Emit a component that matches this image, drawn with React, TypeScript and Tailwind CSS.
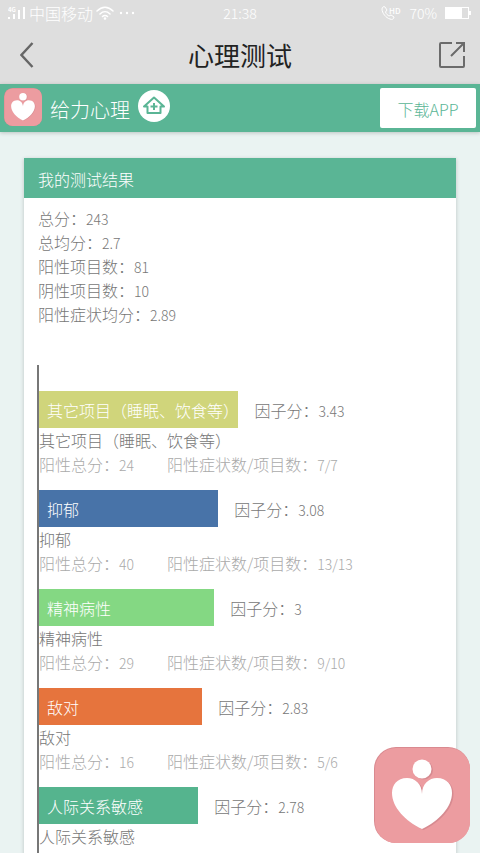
type Factor = {
  name: string;
  score: string;
  positiveTotal: string;
  ratio: string;
  barPercent: number;
  barColor: string;
};

const summary = [
  { label: "总分", value: "243" },
  { label: "总均分", value: "2.7" },
  { label: "阳性项目数", value: "81" },
  { label: "阴性项目数", value: "10" },
  { label: "阳性症状均分", value: "2.89" },
];

const factors: Factor[] = [
  {
    name: "其它项目（睡眠、饮食等）",
    score: "3.43",
    positiveTotal: "24",
    ratio: "7/7",
    barPercent: 49.5,
    barColor: "bg-[#d0d57b]",
  },
  {
    name: "抑郁",
    score: "3.08",
    positiveTotal: "40",
    ratio: "13/13",
    barPercent: 44.5,
    barColor: "bg-[#4873a8]",
  },
  {
    name: "精神病性",
    score: "3",
    positiveTotal: "29",
    ratio: "9/10",
    barPercent: 43.5,
    barColor: "bg-[#84d883]",
  },
  {
    name: "敌对",
    score: "2.83",
    positiveTotal: "16",
    ratio: "5/6",
    barPercent: 40.5,
    barColor: "bg-[#e6743d]",
  },
  {
    name: "人际关系敏感",
    score: "2.78",
    positiveTotal: "25",
    ratio: "9/9",
    barPercent: 39.5,
    barColor: "bg-[#55b48e]",
  },
];

function HeartLogo({ className }: { className: string }) {
  return (
    <svg viewBox="0 0 96 96" className={className} aria-hidden="true">
      <rect width="96" height="96" rx="22" fill="#d98a90" />
      <rect x="1" y="1" width="95" height="95" rx="21" fill="#ec9ca0" />
      <g fill="#c97f86" opacity="0.6" transform="translate(1.5 1)">
        <circle cx="48" cy="22" r="9.5" />
        <path d="M48 47C48 37 41 31 33 31C23 31 18 38 18 46C18 60 31 74 48 82C65 74 78 60 78 46C78 38 73 31 63 31C55 31 48 37 48 47Z" />
      </g>
      <g fill="#fff">
        <circle cx="48" cy="22" r="9.5" />
        <path d="M48 47C48 37 41 31 33 31C23 31 18 38 18 46C18 60 31 74 48 82C65 74 78 60 78 46C78 38 73 31 63 31C55 31 48 37 48 47Z" />
      </g>
    </svg>
  );
}

function StatusBar() {
  return (
    <div className="grid h-[26px] grid-cols-3 items-center pr-2 pl-2 text-sm text-white">
      <div className="flex items-center gap-[3px]">
        <svg viewBox="0 0 18 14" className="h-3.5 w-[18px] shrink-0" fill="#fff" aria-hidden="true">
          <text x="0" y="6" fontSize="6" fontWeight="700">
            4G
          </text>
          <rect x="0" y="11" width="2" height="2" />
          <rect x="5" y="8" width="2" height="5" />
          <rect x="10" y="4" width="2" height="9" />
          <rect x="15" y="1" width="2" height="12" />
        </svg>
        <span className="text-base whitespace-nowrap">中国移动</span>
        <svg
          viewBox="0 0 18 14"
          className="h-3.5 w-[18px] shrink-0"
          fill="none"
          stroke="#fff"
          strokeWidth="1.5"
          strokeLinecap="round"
          aria-hidden="true"
        >
          <path d="M1 5C6 0 12 0 17 5M4 8C7 5 11 5 14 8M6.5 10.5C8 9 10 9 11.5 10.5" />
          <circle cx="9" cy="12.5" r="0.6" fill="#fff" />
        </svg>
        <svg viewBox="0 0 16 4" className="ml-0.5 h-1 w-4 shrink-0" fill="#fff" aria-hidden="true">
          <circle cx="2" cy="2" r="1.2" />
          <circle cx="8" cy="2" r="1.2" />
          <circle cx="14" cy="2" r="1.2" />
        </svg>
      </div>
      <span className="text-center">21:38</span>
      <div className="flex items-center justify-end gap-2">
        <svg viewBox="0 0 20 14" className="h-3.5 w-5" fill="none" stroke="#fff" aria-hidden="true">
          <path d="M1 3C1 1 3 0 4 1L6 4L4.5 6C5 8 7 9.5 8 10L10 9L13 11C13 13 11 14 9 13C5 12 1 7 1 3Z" />
          <text x="8" y="8" fontSize="8" fontWeight="500" fill="#fff" stroke="none">
            HD
          </text>
        </svg>
        <span>70%</span>
        <svg viewBox="0 0 27 12" className="h-3 w-[27px]" aria-hidden="true">
          <rect x="0.5" y="0.5" width="23" height="11" fill="none" stroke="#fff" />
          <rect x="1" y="1" width="16" height="10" fill="#fff" />
          <rect x="24" y="4" width="2" height="4" fill="#fff" />
        </svg>
      </div>
    </div>
  );
}

function TitleBar() {
  return (
    <div className="flex h-[58px] items-center justify-between px-3.5 text-[#222]">
      <button type="button" aria-label="返回" className="flex h-10 w-10 items-center pl-1.5">
        <svg
          viewBox="0 0 14 26"
          className="h-[26px] w-3.5"
          fill="none"
          stroke="#666"
          strokeWidth="2.4"
          aria-hidden="true"
        >
          <path d="M12.5 1L1.5 13L12.5 25" />
        </svg>
      </button>
      <h1 className="text-[26px] leading-8 font-normal">心理测试</h1>
      <button type="button" aria-label="分享" className="flex h-10 w-10 items-center justify-end">
        <svg
          viewBox="0 0 28 28"
          className="h-7 w-7"
          fill="none"
          stroke="#6b6b6b"
          strokeWidth="2"
          aria-hidden="true"
        >
          <path d="M14 2H3Q2 2 2 3V25Q2 26 3 26H25Q26 26 26 25V15M18 2H26V11M13 15L26 2" />
        </svg>
      </button>
    </div>
  );
}

function Banner() {
  return (
    <div className="relative flex h-12 shrink-0 items-center bg-[#5ab595] pr-1 pl-1 shadow-[0_1px_4px_rgba(0,0,0,0.2)]">
      <HeartLogo className="mb-0.5 h-[38px] w-[38px]" />
      <span className="ml-2 pt-1 text-xl text-white">给力心理</span>
      <a href="#home" aria-label="首页" className="mb-1 ml-2">
        <svg viewBox="0 0 32 32" className="h-8 w-8" fill="none" aria-hidden="true">
          <circle cx="16" cy="16" r="16" fill="#fff" />
          <path
            d="M6 16.5L16 7.5L26 16.5H22.5V23H9.5V16.5Z"
            stroke="#5ab595"
            strokeWidth="2"
            strokeLinejoin="round"
          />
          <path d="M16 13V20M12.5 16.5H19.5" stroke="#5ab595" strokeWidth="2" />
        </svg>
      </a>
      <a
        href="#download"
        className="ml-auto flex h-10 w-24 items-center justify-center rounded-xs bg-white pt-0.5 text-base text-[#5ab595]"
      >
        下载APP
      </a>
    </div>
  );
}

function FactorRow({ factor }: { factor: Factor }) {
  return (
    <li className="mb-3.5">
      <div className="flex items-center gap-4">
        <div
          className={`flex h-[37px] items-center pl-2 whitespace-nowrap text-white ${factor.barColor}`}
          style={{ width: `${factor.barPercent}%` }}
        >
          {factor.name}
        </div>
        <span>
          因子分：<span className="text-sm">{factor.score}</span>
        </span>
      </div>
      <p>{factor.name}</p>
      <div className="flex text-[#aaa]">
        <p className="w-32">
          阳性总分：<span className="text-sm">{factor.positiveTotal}</span>
        </p>
        <p>
          阳性症状数/项目数：<span className="text-sm">{factor.ratio}</span>
        </p>
      </div>
    </li>
  );
}

export default function App() {
  return (
    <div className="flex h-screen flex-col bg-[#eaf3f2] font-['Noto_Sans_CJK_SC','Liberation_Sans',sans-serif] font-light">
      <header className="shrink-0 bg-[#dedede]">
        <StatusBar />
        <TitleBar />
      </header>
      <Banner />
      <main className="flex-1 overflow-y-auto px-6 pt-[26px] [scrollbar-width:none]">
        <section className="bg-white pb-6 shadow-[0_1px_4px_rgba(0,0,0,0.2)]">
          <h2 className="flex h-10 items-center bg-[#5ab595] px-3.5 pt-0.5 text-base text-white">
            我的测试结果
          </h2>
          <div className="px-3.5 pt-2 leading-6 text-[#777]">
            {summary.map((s) => (
              <p key={s.label}>
                {s.label}：<span className="text-sm">{s.value}</span>
              </p>
            ))}
          </div>
          <ul className="mt-[39px] mr-3.5 ml-[13px] border-l-2 border-[#777] pt-[26px] leading-6 text-[#777]">
            {factors.map((f) => (
              <FactorRow key={f.name} factor={f} />
            ))}
          </ul>
        </section>
      </main>
      <button type="button" aria-label="给力心理" className="fixed right-2.5 bottom-2.5">
        <HeartLogo className="h-24 w-24" />
      </button>
    </div>
  );
}
